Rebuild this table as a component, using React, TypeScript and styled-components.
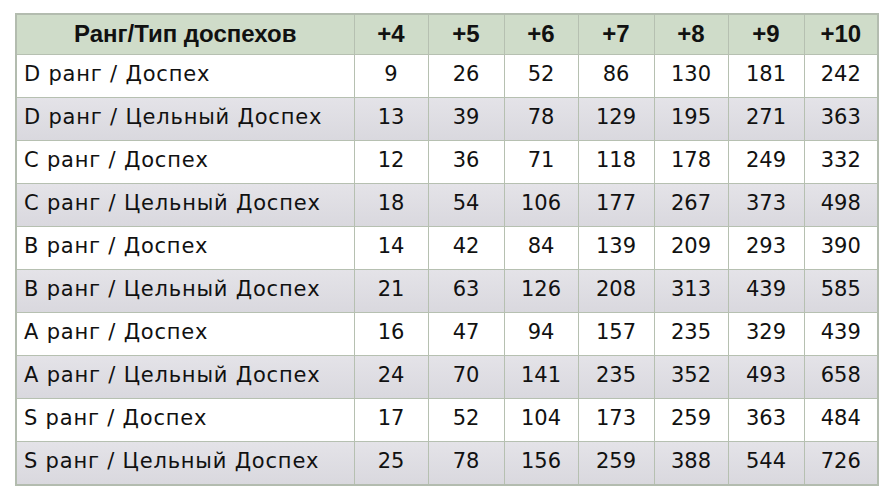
import { createGlobalStyle, styled } from 'styled-components';

const GlobalStyle = createGlobalStyle`
    html, body {
        margin: 0;
        padding: 0;
        background: #ffffff;
    }
`;

const levels = ['+4', '+5', '+6', '+7', '+8', '+9', '+10'];

const rows: { name: string; values: number[] }[] = [
    { name: 'D ранг / Доспех', values: [9, 26, 52, 86, 130, 181, 242] },
    { name: 'D ранг / Цельный Доспех', values: [13, 39, 78, 129, 195, 271, 363] },
    { name: 'C ранг / Доспех', values: [12, 36, 71, 118, 178, 249, 332] },
    { name: 'C ранг / Цельный Доспех', values: [18, 54, 106, 177, 267, 373, 498] },
    { name: 'B ранг / Доспех', values: [14, 42, 84, 139, 209, 293, 390] },
    { name: 'B ранг / Цельный Доспех', values: [21, 63, 126, 208, 313, 439, 585] },
    { name: 'A ранг / Доспех', values: [16, 47, 94, 157, 235, 329, 439] },
    { name: 'A ранг / Цельный Доспех', values: [24, 70, 141, 235, 352, 493, 658] },
    { name: 'S ранг / Доспех', values: [17, 52, 104, 173, 259, 363, 484] },
    { name: 'S ранг / Цельный Доспех', values: [25, 78, 156, 259, 388, 544, 726] },
];

const widths = [338, 74, 76, 74, 76, 74, 76, 74];

const App = () => {
    return (
        <Page>
            <GlobalStyle />
            <Table>
                <colgroup>
                    {widths.map((w, i) => (
                        <col key={i} style={{ width: w }} />
                    ))}
                </colgroup>
                <thead>
                    <tr>
                        <HeadCell>Ранг/Тип доспехов</HeadCell>
                        {levels.map((l) => (
                            <HeadCell key={l}>{l}</HeadCell>
                        ))}
                    </tr>
                </thead>
                <tbody>
                    {rows.map((row, i) => (
                        <Row key={row.name} $shaded={i % 2 === 1}>
                            <NameCell>{row.name}</NameCell>
                            {row.values.map((v, j) => (
                                <NumCell key={j}>{v}</NumCell>
                            ))}
                        </Row>
                    ))}
                </tbody>
            </Table>
        </Page>
    );
};

export default App;

const Page = styled.div`
    width: 888px;
    height: 496px;
    padding: 13px 0 0 15px;
    box-sizing: border-box;
    background: #ffffff;
`;

const Table = styled.table`
    border-collapse: collapse;
    table-layout: fixed;
    width: 862px;
    border: 2px solid #b3bcaf;
`;

const HeadCell = styled.th`
    height: 37px;
    padding: 0 0 2px;
    background: #cfdcc9;
    border: 1px solid #b6c0b1;
    font-family: "Liberation Sans", Arial, sans-serif;
    font-weight: bold;
    font-size: 24px;
    letter-spacing: 0;
    color: #111111;
    text-align: center;
`;

const Row = styled.tr<{ $shaded: boolean }>`
    height: 43px;
    background: ${({ $shaded }) =>
        $shaded ? 'linear-gradient(#e4e3e8, #d9d8de)' : '#ffffff'};
`;

const NameCell = styled.td`
    padding: 0 0 4px 7px;
    border: 1px solid #b6c0b1;
    font-family: "DejaVu Sans", sans-serif;
    font-size: 21px;
    letter-spacing: 0.8px;
    color: #111111;
    white-space: nowrap;
`;

const NumCell = styled.td`
    padding: 0 0 4px;
    border: 1px solid #b6c0b1;
    font-family: "DejaVu Sans", sans-serif;
    font-size: 21px;
    color: #111111;
    text-align: center;
`;
